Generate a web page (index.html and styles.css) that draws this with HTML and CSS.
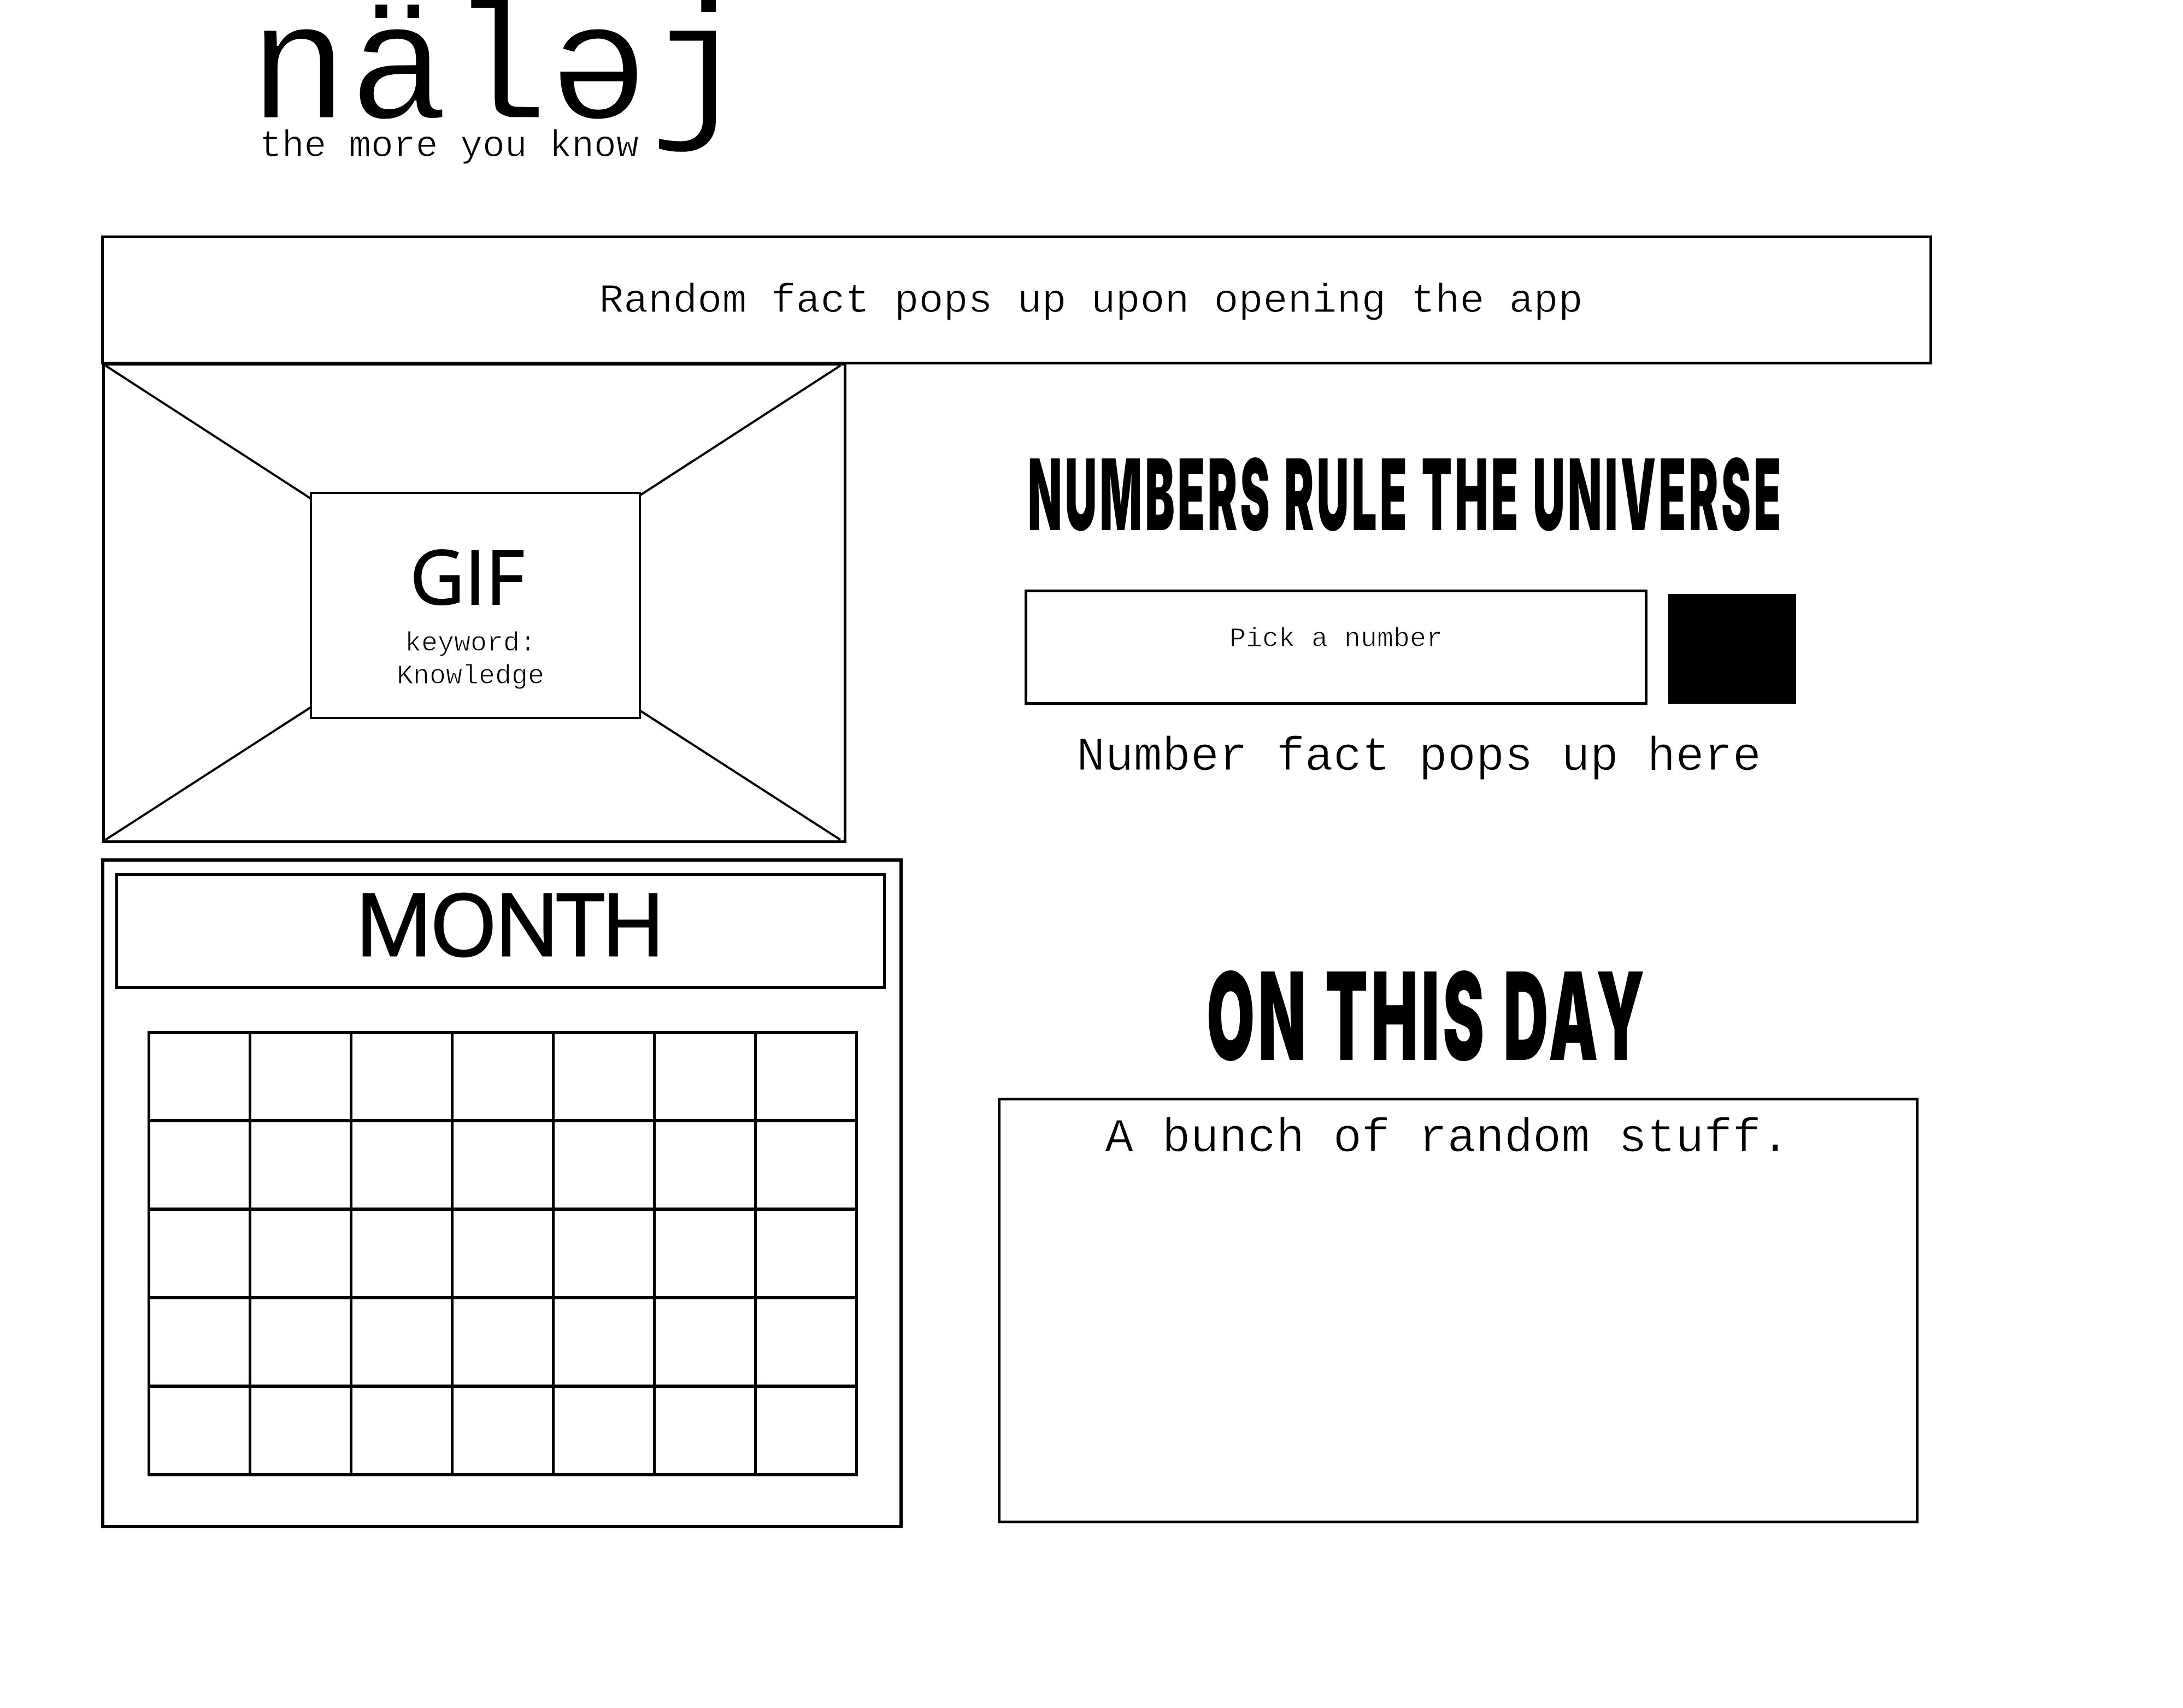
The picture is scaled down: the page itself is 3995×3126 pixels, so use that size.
FILE: index.html
```html
<!DOCTYPE html>
<html lang="en">

<head>
    <meta charset="UTF-8">
    <title>nälәj</title>
    <link rel="stylesheet" href="styles.css">
</head>

<body>
    <div class="logo">
        <div class="logo-name">nälәj</div>
        <div class="logo-tag">the more you know</div>
    </div>

    <div class="fact-bar">Random fact pops up upon opening the app</div>

    <div class="main">
        <div class="left">
            <div class="gif-frame">
                <svg class="gif-lines" width="1362" height="879" viewBox="0 0 1362 879">
                    <line x1="6" y1="5" x2="381" y2="248"></line>
                    <line x1="1351" y1="5" x2="985" y2="242"></line>
                    <line x1="6" y1="873" x2="381" y2="631"></line>
                    <line x1="1351" y1="873" x2="985" y2="637"></line>
                </svg>
                <div class="gif-box">
                    <div class="gif-title">GIF</div>
                    <div class="gif-key">keyword:<br>Knowledge</div>
                </div>
            </div>

            <div class="calendar">
                <div class="month">MONTH</div>
                <div class="days">
                    <div></div><div></div><div></div><div></div><div></div><div></div><div></div>
                    <div></div><div></div><div></div><div></div><div></div><div></div><div></div>
                    <div></div><div></div><div></div><div></div><div></div><div></div><div></div>
                    <div></div><div></div><div></div><div></div><div></div><div></div><div></div>
                    <div></div><div></div><div></div><div></div><div></div><div></div><div></div>
                </div>
            </div>
        </div>

        <div class="right">
            <h2 class="numbers-title">NUMBERS RULE THE UNIVERSE</h2>
            <form class="number-form">
                <input class="number-input" type="text" placeholder="Pick a number">
                <button class="number-btn" type="button" aria-label="Go"></button>
            </form>
            <div class="number-fact">Number fact pops up here</div>

            <h2 class="day-title">ON THIS DAY</h2>
            <div class="day-box">A bunch of random stuff.</div>
        </div>
    </div>
</body>

</html>
```

FILE: styles.css
```css
* {
    box-sizing: border-box;
}

body {
    margin: 0;
    padding-left: 185px;
    width: 3995px;
    height: 3126px;
    overflow: hidden;
    background: #fff;
    color: #000;
    font-family: 'Liberation Mono', 'Courier New', monospace;
    -webkit-text-stroke: 1px #fff;
}

/* logo */
.logo {
    padding-left: 270px;
}

.logo-name {
    margin-top: -17px;
    font-size: 305px;
    line-height: 305px;
    white-space: nowrap;
    -webkit-text-stroke: 3px #fff;
}

.logo-tag {
    margin-top: -54px;
    padding-left: 20px;
    font-size: 68px;
    line-height: 68px;
}

.fact-bar {
    margin-top: 129px;
    width: 3351px;
    height: 236px;
    padding: 4px 0 0 272px;
    border: 5px solid #000;
    display: flex;
    align-items: center;
    justify-content: center;
    font-size: 75px;
}

.main {
    display: flex;
    gap: 174px;
}

.left {
    width: 1467px;
}

/* gif placeholder */
.gif-frame {
    position: relative;
    margin: -3px 0 0 2px;
    width: 1362px;
    height: 879px;
    padding: 231px 0 0 375px;
    border: 5px solid #000;
}

.gif-lines {
    position: absolute;
    left: -5px;
    top: -5px;
}

.gif-lines line {
    stroke: #000;
    stroke-width: 4;
}

.gif-box {
    position: relative;
    width: 606px;
    height: 416px;
    padding-right: 18px;
    border: 4px solid #000;
    background: #fff;
    text-align: center;
}

.gif-title {
    margin-top: 68px;
    padding-right: 12px;
    font-family: 'Open Sans', sans-serif;
    font-size: 138px;
    line-height: 160px;
    -webkit-text-stroke: 2px #000;
}

.gif-key {
    margin-top: 16px;
    font-size: 50px;
    line-height: 60px;
}

/* calendar */
.calendar {
    margin-top: 28px;
    height: 1226px;
    padding: 21px 0 0 20px;
    border: 6px solid #000;
}

.month {
    width: 1410px;
    height: 212px;
    padding: 0 0 30px 30px;
    border: 5px solid #000;
    text-align: center;
    font-family: 'Open Sans', sans-serif;
    font-size: 158px;
    line-height: 170px;
    letter-spacing: -5px;
    -webkit-text-stroke: 3px #000;
}

.days {
    margin: 77px 0 0 59px;
    width: 1300px;
    display: grid;
    grid-template-columns: repeat(7, 185px);
    grid-auto-rows: 162px;
    border-top: 5px solid #000;
    border-left: 5px solid #000;
}

.days>div {
    border-right: 5px solid #000;
    border-bottom: 6px solid #000;
}

/* right column */
.right {
    width: 1685px;
}

.numbers-title,
.day-title {
    margin: 0;
    font-family: 'Inter', 'Liberation Sans', sans-serif;
    font-weight: 900;
    white-space: nowrap;
    transform-origin: left top;
    -webkit-text-stroke: 0;
}

.numbers-title {
    margin: 143px 0 0 55px;
    font-size: 180px;
    line-height: 190px;
    letter-spacing: 12px;
    transform: scaleX(0.45);
}

.number-form {
    margin: 79px 0 0 49px;
    display: flex;
    align-items: flex-end;
    gap: 38px;
}

.number-input {
    width: 1140px;
    height: 211px;
    padding: 0 0 30px;
    border: 5px solid #000;
    border-radius: 0;
    outline: none;
    text-align: center;
    font-family: 'Liberation Mono', 'Courier New', monospace;
    font-size: 50px;
    -webkit-text-stroke: 1px #fff;
}

.number-input::placeholder {
    color: #000;
    opacity: 1;
}

.number-btn {
    width: 234px;
    height: 201px;
    margin-bottom: 2px;
    padding: 0;
    border: 0;
    background: #000;
}

.number-fact {
    margin: 46px 0 0 144px;
    font-size: 87px;
    line-height: 100px;
    white-space: nowrap;
}

.day-title {
    margin: 309px 0 0 382px;
    font-size: 222px;
    line-height: 230px;
    letter-spacing: 12px;
    transform: scaleX(0.513);
}

.day-box {
    margin-top: 34px;
    width: 1685px;
    height: 779px;
    padding: 20px 40px 0 0;
    border: 5px solid #000;
    text-align: center;
    font-size: 87px;
    line-height: 100px;
}
```
